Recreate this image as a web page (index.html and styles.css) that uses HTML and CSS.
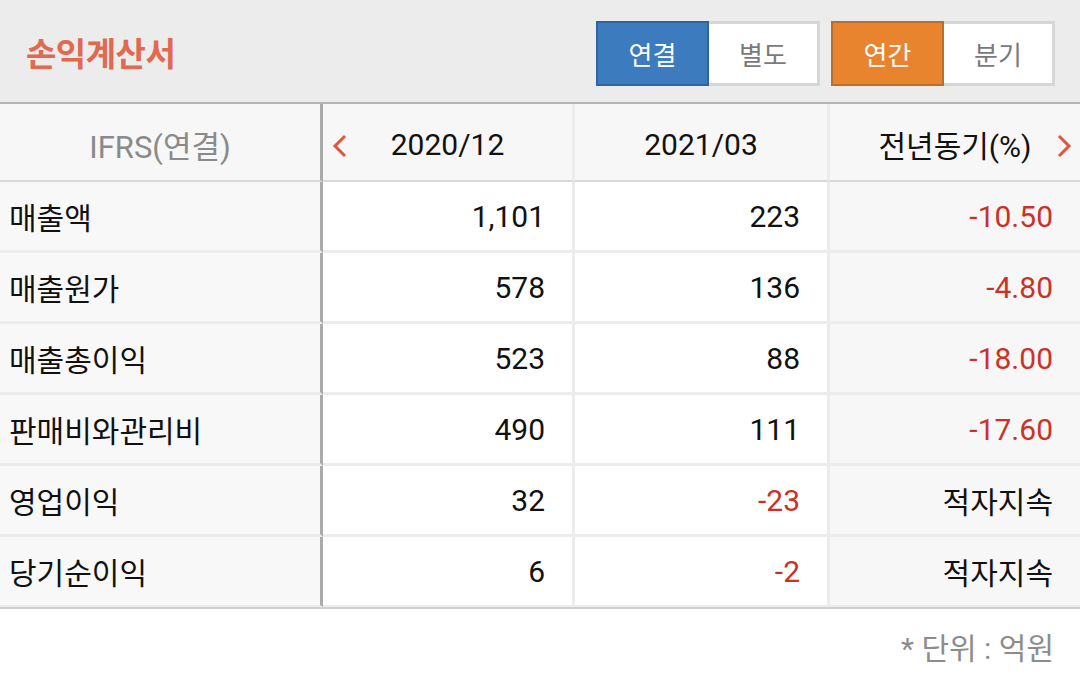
FILE: index.html
```html
<!DOCTYPE html>
<html lang="ko">
<head>
<meta charset="utf-8">
<title>손익계산서</title>
<link rel="stylesheet" href="styles.css">
</head>
<body>
<div class="page">
  <header class="topbar">
    <h1 class="title">손익계산서</h1>
    <div class="toggles">
      <div class="seg">
        <button class="btn active-blue">연결</button>
        <button class="btn">별도</button>
      </div>
      <div class="seg">
        <button class="btn active-orange">연간</button>
        <button class="btn">분기</button>
      </div>
    </div>
  </header>

  <div class="table">
    <div class="cell head c1 muted">IFRS(연결)</div>
    <div class="cell head c2">
      <svg class="arrow arrow-left" width="16" height="24" viewBox="0 0 16 24"><path d="M13 2 L3 12 L13 22" fill="none" stroke="#e0553b" stroke-width="3"/></svg>
      <span class="num">2020/12</span>
    </div>
    <div class="cell head c3"><span class="num">2021/03</span></div>
    <div class="cell head c4">
      <span class="num">전년동기(%)</span>
      <svg class="arrow arrow-right" width="16" height="24" viewBox="0 0 16 24"><path d="M3 2 L13 12 L3 22" fill="none" stroke="#e0553b" stroke-width="3"/></svg>
    </div>

    <div class="cell label c1">매출액</div>
    <div class="cell val c2">1,101</div>
    <div class="cell val c3">223</div>
    <div class="cell val c4 neg">-10.50</div>

    <div class="cell label c1">매출원가</div>
    <div class="cell val c2">578</div>
    <div class="cell val c3">136</div>
    <div class="cell val c4 neg">-4.80</div>

    <div class="cell label c1">매출총이익</div>
    <div class="cell val c2">523</div>
    <div class="cell val c3">88</div>
    <div class="cell val c4 neg">-18.00</div>

    <div class="cell label c1">판매비와관리비</div>
    <div class="cell val c2">490</div>
    <div class="cell val c3">111</div>
    <div class="cell val c4 neg">-17.60</div>

    <div class="cell label c1">영업이익</div>
    <div class="cell val c2">32</div>
    <div class="cell val c3 neg">-23</div>
    <div class="cell val c4 ko">적자지속</div>

    <div class="cell label c1 last">당기순이익</div>
    <div class="cell val c2 last">6</div>
    <div class="cell val c3 neg last">-2</div>
    <div class="cell val c4 ko last">적자지속</div>
  </div>

  <footer class="foot">* 단위 : 억원</footer>
</div>
</body>
</html>
```

FILE: styles.css
```css
* { box-sizing: border-box; }
html, body {
  margin: 0;
  padding: 0;
  background: #ffffff;
}
body {
  font-family: Roboto, "Noto Sans CJK KR", sans-serif;
  color: #111;
  width: 1080px;
  height: 678px;
  overflow: hidden;
}
.topbar {
  height: 104px;
  background: #ececec;
  border-bottom: 2px solid #b4b4b4;
  display: flex;
  align-items: center;
  justify-content: space-between;
  padding: 0 25px 0 26px;
}
.title {
  margin: 0;
  font-family: "Noto Sans CJK KR", sans-serif;
  font-size: 33px;
  font-weight: 700;
  color: #e0694f;
  letter-spacing: -0.5px;
  position: relative;
  top: 1px;
}
.toggles {
  display: flex;
  gap: 11px;
  margin-top: 4px;
}
.seg {
  display: flex;
  background: #fff;
  border: 3px solid #d6d6d6;
  height: 65px;
}
.btn {
  width: 108px;
  margin: -3px 0;
  height: 65px;
  border: none;
  background: transparent;
  font-family: "Noto Sans CJK KR", sans-serif;
  font-size: 26px;
  color: #7a7a7a;
  padding: 0;
}
.btn:first-child { margin-left: -3px; width: 113px; }
.active-blue {
  background: #3b7bbe;
  border: 2px solid #2e64a3;
  color: #fff;
}
.active-orange {
  background: #e8842d;
  border: 2px solid #b86e2c;
  color: #fff;
}

.table {
  display: grid;
  grid-template-columns: 323px 252px 255px 1fr;
  border-bottom: 2px solid #cfcfcf;
}
.cell {
  display: flex;
  align-items: center;
  height: 71px;
  border-bottom: 3px solid #ececec;
  background: #fff;
}
.cell.last { border-bottom: 2px solid #ececec; height: 70px; }
.c1 { background: #f8f8f8; border-right: 3px solid #aaaaaa; }
.c2, .c3 { border-right: 3px solid #ececec; }
.c4 { background: #f7f7f7; }
.head {
  height: 78px;
  background: #f7f7f7;
  border-bottom: 2px solid #d8d8d8;
  justify-content: center;
  position: relative;
  font-size: 30px;
  padding-top: 4px;
}
.muted {
  color: #8a8a8a;
  font-size: 31px;
}
.num { color: #111; }
.arrow { position: absolute; top: 30px; }
.arrow-left { left: 9px; }
.arrow-right { right: 8px; }
.label {
  font-family: "Noto Sans CJK KR", sans-serif;
  font-size: 30px;
  padding-left: 9px;
  color: #111;
}
.val {
  justify-content: flex-end;
  padding-right: 27px;
  font-size: 30px;
}
.ko {
  font-family: "Noto Sans CJK KR", sans-serif;
  font-size: 30px;
}
.neg { color: #cc3128; }
.foot {
  text-align: right;
  padding: 15px 26px 0 0;
  font-family: Roboto, "Noto Sans CJK KR", sans-serif;
  font-size: 30px;
  color: #8c8c8c;
}
```
